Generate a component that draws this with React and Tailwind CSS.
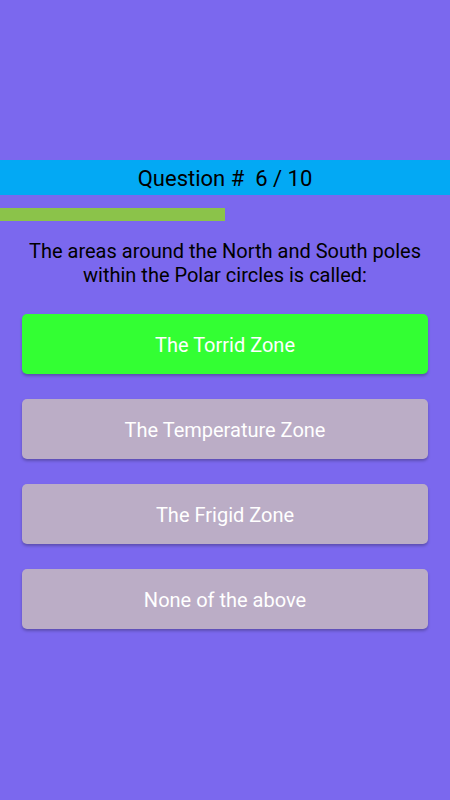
import React from 'react';

const options = [
  { id: 1, label: 'The Torrid Zone', selected: true },
  { id: 2, label: 'The Temperature Zone' },
  { id: 3, label: 'The Frigid Zone' },
  { id: 4, label: 'None of the above' },
];

const App = () => {
  return (
    <div className="min-h-[800px] w-full bg-[#7b68ee] font-['Roboto',sans-serif] pt-[160px]">
      <div className="h-[35px] pt-[3px] bg-[#03a9f4] flex items-center justify-center">
        <h2 className="text-[22px] leading-[26px] text-black">Question #&nbsp; 6 / 10</h2>
      </div>
      <div className="mt-[13px] h-[13px] w-[225px] bg-[#8bc34a]" />
      <p className="mt-[18px] px-4 text-center text-[20px] leading-[24px] text-black">
        The areas around the North and South poles within the Polar circles is called:
      </p>
      <div className="mt-[27px] px-[22px] flex flex-col gap-[25px]">
        {options.map((opt) => (
          <button
            key={opt.id}
            className={`h-[60px] w-full rounded-[5px] pt-[2px] text-[20px] text-white shadow-[0_2px_3px_rgba(0,0,0,0.25)] ${
              opt.selected ? 'bg-[#33ff33]' : 'bg-[#bbadc6]'
            }`}
          >
            {opt.label}
          </button>
        ))}
      </div>
    </div>
  );
};

export default App;
